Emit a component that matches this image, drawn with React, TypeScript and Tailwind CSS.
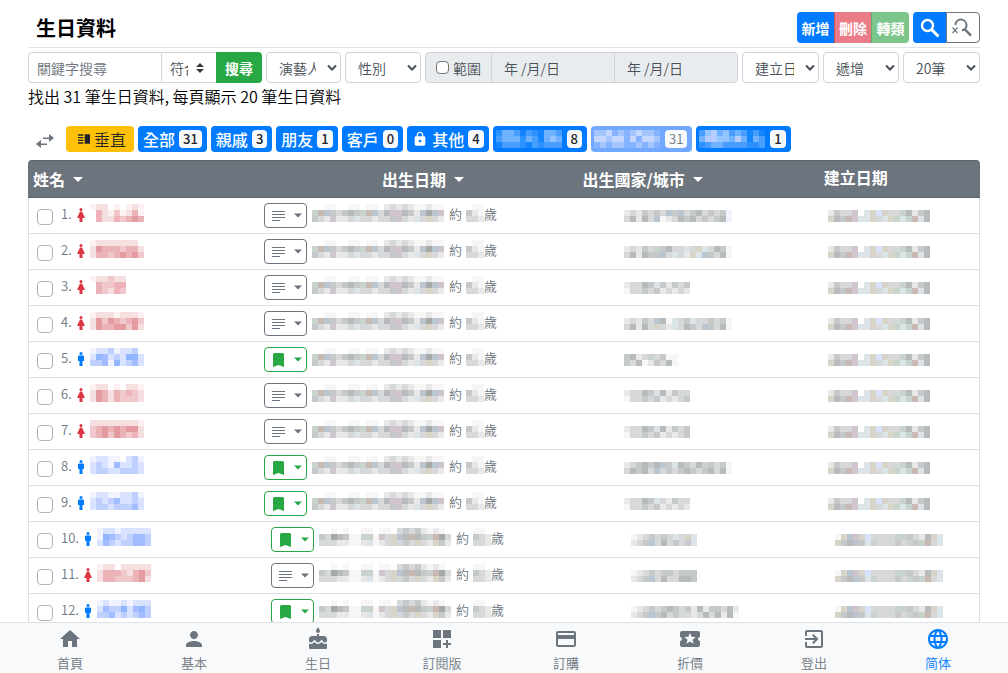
import React from "react";
import clsx from "clsx";
import type { IconType } from "react-icons";
import {
  MdCake,
  MdCreditCard,
  MdDashboardCustomize,
  MdExitToApp,
  MdHome,
  MdLanguage,
  MdLocalActivity,
  MdLock,
  MdPerson,
  MdVerticalSplit,
} from "react-icons/md";

interface IMosaic {
  rows: string[];
  label: string;
  className?: string;
}

interface IPerson {
  female: boolean;
  marked: boolean;
  name: string[];
  place: string[];
}

// one letter for each shade of a masked text
const SHADES: Record<string, string> = {
  a: "#f6f6f7",
  b: "#e8e8e8",
  c: "#d6d8d9",
  d: "#c6c9ca",
  e: "#b8bbbc",
  f: "#a5a9a8",
  g: "#c8bab2",
  h: "#d0c4cf",
  i: "#b9c6d2",
  j: "#dbe4e8",
  k: "#d8d4c8",
  l: "#c8d3ce",
  p: "#fdf1f2",
  q: "#f6dfe1",
  r: "#f0c8cc",
  s: "#ebb3b7",
  t: "#e39ba0",
  u: "#f0f3ff",
  v: "#d9e3ff",
  w: "#bfd0ff",
  x: "#a2bdff",
  y: "#8fb6ff",
  0: "#1484ff",
  1: "#2d91ff",
  2: "#479eff",
  3: "#6fb2ff",
  4: "#93c4ff",
  5: "#b5ccff",
  6: "#85b3ff",
  7: "#a5c5ff",
  8: "#c4d7ff",
};

const BIRTH = [
  "..aa..aa.aa.bcbcbaabaa",
  "lgidcdedlgicehhedbifih",
  "dcbhbbcjccbccdhcbjckcb",
];
const BIRTH_WIDE = [
  "..a.a..aa.aa.cdcdbaba.",
  "dcfedaallahckiegedlgfc",
  "cccbbaabjabckcdckcbkdb",
];
const AGE = [".aa", "dba", "ccb"];
const AGE_WIDE = ["aa.", "dcb", "ccb"];
const CREATED = ["bdcch.jkvkcclebde", "kedghjjkcjkljlgje"];
const CREATED_WIDE = ["akihkvcccclldcbekj", "kdeidjlcccdcldlgcj"];

const PEOPLE: IPerson[] = [
  { female: true, marked: false, name: ["pqq.p.pqp", ".sqprpqsp", ".sqqsrsts"], place: ["bcbdcdcidicdecdcdu", "cebeciabcedecdcdeu"] },
  { female: true, marked: false, name: ["pqqqqqqq.", "qtsssrssq", "qssrststr"], place: ["bcbdcldeccjckjceda", "cebeddicjcbkjidcea"] },
  { female: true, marked: false, name: ["pqqrqq", ".srrss", ".srqsr"], place: ["bccedjdbdcd", "accdcdbcbcb"] },
  { female: true, marked: false, name: ["pqqqpqqqp", "qtrtsrstr", "qtssttrtq"], place: ["bcbdcieajcdjccdcda", "cebeckcbjcedcidcea"] },
  { female: false, marked: true, name: ["uvvwuvvw.", "vyxvwvyyv", "wwxuyvwxv"], place: ["debclcdaa", "dceabdcea"] },
  { female: true, marked: false, name: ["pqq.p.qqp", "qtsqsrsrq", "qtsqsrrrq"], place: ["bccedjebdcc", "accdcdbcbcd"] },
  { female: true, marked: false, name: ["qqqqqqqqp", "rstststtq", "rstrtsrsq"], place: ["bccedjebdcd", "accdcdbcbcd"] },
  { female: false, marked: true, name: ["uvvuu.vwu", "vwvuxvvwv", "vwwvvwwwv"], place: ["bcdedeidjedceldcda", "cedecicdcdedcdecea"] },
  { female: false, marked: true, name: ["uvvuuvvwu", "vwvwxvvwv", "vwwvwwwxv"], place: ["bccedjcbdcc", "accdcdbcbcb"] },
  { female: false, marked: true, name: ["uvvuvvvvv", "uyxwvwxxw", "vxwvwwxxw"], place: ["abcdcdcjckj", "bcdicecdcdj"] },
  { female: true, marked: false, name: ["pqq.qqqqq", "qsssrqstr", "qssrrrstq"], place: ["abcdcddcddd", "bcdicecceed"] },
  { female: false, marked: true, name: ["uvuuvuvvv", "vxwwyvxyw", "wwxvwvwxw"], place: ["abcdcdedcdbebddceb", "bcdidecdccbcecebea"] },
];

const TABS = [
  { label: "全部", count: 31 },
  { label: "親戚", count: 3 },
  { label: "朋友", count: 1 },
  { label: "客戶", count: 0 },
  { label: "其他", count: 4, locked: true },
];

const MASKED_TABS = [
  { rows: ["13320210332", "23331320343", "02221021222"], count: 8, active: false },
  { rows: ["77867678776", "88788686887", "67677667676"], count: 31, active: true },
  { rows: ["24534232020", "35544353032", "12332222112"], count: 1, active: false },
];

const NAV: { label: string; icon: IconType }[] = [
  { label: "首頁", icon: MdHome },
  { label: "基本", icon: MdPerson },
  { label: "生日", icon: MdCake },
  { label: "訂閱版", icon: MdDashboardCustomize },
  { label: "訂購", icon: MdCreditCard },
  { label: "折價", icon: MdLocalActivity },
  { label: "登出", icon: MdExitToApp },
  { label: "简体", icon: MdLanguage },
];

// masked text, 6px cells
function Mosaic({ rows, label, className }: IMosaic) {
  return (
    <svg
      role="img"
      aria-label={label}
      width={rows[0].length * 6}
      height={rows.length * 6}
      shapeRendering="crispEdges"
      className={clsx("block shrink-0", className)}
    >
      {rows.map((row, y) =>
        row.split("").map((cell, x) =>
          SHADES[cell] ? (
            <rect key={`${x}-${y}`} x={x * 6} y={y * 6} width={6} height={6} fill={SHADES[cell]} />
          ) : null
        )
      )}
    </svg>
  );
}

function Gender({ female }: { female: boolean }) {
  return (
    <svg
      width="8"
      height="14"
      viewBox="0 0 8 14"
      className={clsx("block shrink-0", female ? "text-[#dc3545]" : "text-[#007bff]")}
      fill="currentColor"
    >
      <circle cx="4" cy="1.5" r="1.5" />
      {female ? (
        <path d="M3 3.5h2L8 10H5.5v4h-3v-4H0z" />
      ) : (
        <path d="M2 3.5h4a1 1 0 0 1 1 1V9H5.5v5h-3V9H1V4.5a1 1 0 0 1 1-1z" />
      )}
    </svg>
  );
}

function Caret({ className }: { className?: string }) {
  return (
    <svg width="10" height="5" viewBox="0 0 10 5" className={clsx("shrink-0", className)} fill="currentColor">
      <path d="M0 0h10L5 5z" />
    </svg>
  );
}

function Lines() {
  return (
    <svg width="13" height="10" viewBox="0 0 13 10" fill="currentColor" shapeRendering="crispEdges">
      <path d="M0 0h13v1H0zM0 3h13v1H0zM0 6h13v1H0zM0 9h8v1H0z" />
    </svg>
  );
}

function Bookmark() {
  return (
    <svg width="13" height="14" viewBox="0 0 13 14" fill="currentColor">
      <path d="M2.5 0h8A1.5 1.5 0 0 1 12 1.5V14l-5.5-2L1 14V1.5A1.5 1.5 0 0 1 2.5 0z" />
    </svg>
  );
}

function Swap() {
  return (
    <svg width="20" height="16" viewBox="0 0 20 16" fill="currentColor">
      <path d="M14 1l5 4-5 4V6H8V4.5h6zM6 7L1 11l5 4v-3h6v-1.5H6z" />
    </svg>
  );
}

function Search() {
  return (
    <svg width="24" height="24" viewBox="0 0 24 24" fill="none" stroke="currentColor" strokeWidth="2.5">
      <circle cx="9.5" cy="9.5" r="5.5" />
      <path d="M13.5 13.5l7 7" strokeWidth="3" />
    </svg>
  );
}

function SearchOff() {
  return (
    <svg width="24" height="24" viewBox="0 0 24 24" fill="none" stroke="currentColor">
      <path d="M4.5 9a5.5 5.5 0 1 1 6.5 5.5" strokeWidth="2" />
      <path d="M13.5 13l6.5 6.7" strokeWidth="2.4" />
      <path d="M1.5 11.5l5 5.5M6.5 11.5l-5 5.5" strokeWidth="1.2" />
    </svg>
  );
}

function Select({ label, value, className }: { label: string; value: string; className: string }) {
  return (
    <div className={clsx("relative h-[31px]", className)}>
      <select
        aria-label={label}
        className="h-full w-full appearance-none rounded-sm border border-[#ced4da] bg-white pl-3 pr-6 text-sm text-[#495057] outline-none"
      >
        <option>{value}</option>
      </select>
      <svg
        width="10"
        height="8"
        viewBox="0 0 10 8"
        className="pointer-events-none absolute right-1 top-3"
        fill="none"
        stroke="#495057"
        strokeWidth="2"
      >
        <path d="M1 1.5l4 4 4-4" />
      </svg>
    </div>
  );
}

function Filters() {
  return (
    <form className="flex gap-1" onSubmit={(e) => e.preventDefault()}>
      {/* keyword */}
      <div className="flex h-[31px] flex-[234]">
        <input
          type="text"
          aria-label="關鍵字搜尋"
          placeholder="關鍵字搜尋"
          className="w-0 flex-1 rounded-l-sm border border-[#ced4da] px-2 text-sm outline-none placeholder:text-[#6c757d]"
        />
        <div className="relative w-[54px]">
          <select
            aria-label="符合"
            className="h-full w-full appearance-none border-y border-[#ced4da] bg-white pl-2 pr-7 text-sm text-[#495057] outline-none"
          >
            <option>符合</option>
          </select>
          <svg width="8" height="10" viewBox="0 0 8 10" className="pointer-events-none absolute right-3 top-[11px]" fill="#343a40">
            <path d="M0 4l4-4 4 4zM0 6h8l-4 4z" />
          </svg>
        </div>
        <button type="submit" className="w-[46px] rounded-r-sm bg-[#28a745] text-sm font-bold text-white">
          搜尋
        </button>
      </div>
      <Select label="關係" value="演藝人員" className="flex-[75]" />
      <Select label="性別" value="性別" className="flex-[76]" />
      {/* date range */}
      <div className="flex h-[31px] flex-[311] overflow-hidden rounded-sm border border-[#ced4da] bg-[#e9ecef] text-sm text-[#495057]">
        <label className="flex w-[66px] items-center justify-center gap-1 border-r border-[#ced4da]">
          <input type="checkbox" className="size-[13px] appearance-none rounded-sm border border-[#767676] bg-white" />
          範圍
        </label>
        <input
          disabled
          type="text"
          aria-label="開始日期"
          defaultValue="年 /月/日"
          className="w-0 flex-1 border-r border-[#ced4da] px-3"
        />
        <input disabled type="text" aria-label="結束日期" defaultValue="年 /月/日" className="w-0 flex-1 px-3" />
      </div>
      <Select label="排序欄位" value="建立日期" className="flex-[77]" />
      <Select label="排序方式" value="遞增" className="flex-[76]" />
      <Select label="每頁筆數" value="20筆" className="flex-[77]" />
    </form>
  );
}

function Tabs() {
  return (
    <div className="flex items-center gap-1">
      <button aria-label="切換" className="mr-2 w-[26px] pl-[7px] pt-1 text-[#6c757d]">
        <Swap />
      </button>
      <button className="flex h-[26px] items-center gap-0.5 rounded-sm bg-[#ffc107] pl-2.5 pr-2 text-base text-[#212529]">
        <MdVerticalSplit size={16} />
        垂直
      </button>
      {TABS.map((tab) => (
        <button
          key={tab.label}
          className="flex h-[26px] items-center gap-1 rounded-sm bg-[#007bff] px-[5px] text-base font-medium text-white"
        >
          {tab.locked && <MdLock size={16} />}
          {tab.label}
          <span className="rounded-sm bg-[#f8f9fa] px-1 text-[13px] leading-[18px] text-[#212529]">{tab.count}</span>
        </button>
      ))}
      {MASKED_TABS.map((tab) => (
        <button
          key={tab.count}
          className={clsx(
            "flex h-[26px] items-center gap-[5px] rounded-sm pl-[3px] pr-[5px]",
            tab.active ? "bg-[#70a9ff] text-[#6c757d]" : "bg-[#007bff] font-medium text-[#212529]"
          )}
        >
          <Mosaic rows={tab.rows} label="自訂分類" />
          <span className="rounded-sm bg-[#f8f9fa] px-1 text-[13px] leading-[18px]">{tab.count}</span>
        </button>
      ))}
    </div>
  );
}

function Row({ person, index }: { person: IPerson; index: number }) {
  const wide = index > 8;

  return (
    <tr>
      <td className="border-l pl-2">
        <div className="flex">
          <input
            type="checkbox"
            aria-label={`選取第 ${index + 1} 筆`}
            className="mt-[11px] size-4 appearance-none rounded-sm border border-[#adb5bd] bg-white"
          />
          <span className="ml-2 mt-1.5">{index + 1}.</span>
          <span className="ml-[5px] mt-2.5">
            <Gender female={person.female} />
          </span>
          <Mosaic rows={person.name} label="姓名" className="ml-[5px] mt-1.5" />
        </div>
      </td>
      <td className={wide ? "pl-[7px]" : ""}>
        <div className="flex">
          <button
            aria-label="備註"
            className={clsx(
              "mt-[5px] flex h-[25px] w-[43px] items-center justify-between rounded-sm border pl-[7px] pr-1",
              person.marked ? "border-[#28a745] text-[#28a745]" : "border-[#6c757d] text-[#6c757d]"
            )}
          >
            {person.marked ? <Bookmark /> : <Lines />}
            <Caret className="w-2" />
          </button>
          <Mosaic rows={wide ? BIRTH_WIDE : BIRTH} label="出生日期" className="ml-[5px] mt-1.5" />
          <span className="ml-[5px] mt-1.5">約</span>
          <Mosaic rows={wide ? AGE_WIDE : AGE} label="年齡" className="ml-1 mt-1.5" />
          <span className="mt-1.5">歲</span>
        </div>
      </td>
      <td className={wide ? "pl-[7px]" : ""}>
        <Mosaic rows={person.place} label="出生國家/城市" className="ml-[50px] mt-3" />
      </td>
      <td className={clsx("border-r", wide && "pl-[7px]")}>
        <Mosaic rows={wide ? CREATED_WIDE : CREATED} label="建立日期" className="ml-1 mt-3" />
      </td>
    </tr>
  );
}

function DataTable() {
  return (
    <table className="w-full table-fixed border-separate border-spacing-0 text-[13px] leading-5 text-[#6c757d] [&_tbody_td]:h-9 [&_tbody_td]:border-b [&_tbody_td]:border-[#dee2e6] [&_tbody_td]:align-top">
      <colgroup>
        <col className="w-[24.8%]" />
        <col className="w-[32.6%]" />
        <col className="w-[26.2%]" />
        <col className="w-[16.4%]" />
      </colgroup>
      <thead>
        <tr className="h-[38px] text-left text-base text-white [&>th]:border-y [&>th]:border-[#5c636a] [&>th]:bg-[#6c757d]">
          <th className="rounded-tl-sm pl-[5px]">
            <span className="flex items-center gap-2">
              姓名 <Caret />
            </span>
          </th>
          <th>
            <span className="flex items-center gap-2 pl-[118px]">
              出生日期 <Caret />
            </span>
          </th>
          <th>
            <span className="flex items-center gap-2 pl-2">
              出生國家/城市 <Caret />
            </span>
          </th>
          <th className="rounded-tr-sm pb-1">建立日期</th>
        </tr>
      </thead>
      <tbody>
        {PEOPLE.map((person, index) => (
          <Row key={index} person={person} index={index} />
        ))}
      </tbody>
    </table>
  );
}

function BottomNav() {
  return (
    <nav className="fixed inset-x-0 bottom-0 grid grid-cols-8 border-t border-[#dee2e6] bg-[#f8f9fa] px-2 pt-1">
      {NAV.map(({ label, icon: Icon }) => (
        <a
          key={label}
          href="#"
          className={clsx(
            "flex flex-col items-center gap-0.5 text-[13px] leading-5",
            label === "简体" ? "text-[#007bff]" : "text-[#6c757d]"
          )}
        >
          <Icon size={24} />
          {label}
        </a>
      ))}
    </nav>
  );
}

export default function App() {
  return (
    <div className="h-screen overflow-hidden bg-white font-['Noto_Sans_CJK_TC','Noto_Sans',sans-serif] font-[350] text-[#212529]">
      <main className="px-7 pt-3">
        <header className="mb-1 flex items-start justify-between border-b border-[#dee2e6] pb-1">
          <h1 className="pl-2 text-xl font-bold leading-[31px] text-black">生日資料</h1>
          <div className="flex gap-1">
            <div className="flex h-[31px] text-sm font-bold text-white">
              <button className="w-[37px] rounded-l-sm bg-[#007bff]">新增</button>
              <button className="w-[37px] border-l border-[#c9505f] bg-[#ea7c87]">刪除</button>
              <button className="w-[38px] rounded-r-sm border-l border-[#5fae70] bg-[#7cc68b]">轉類</button>
            </div>
            <div className="flex h-[31px]">
              <button aria-label="搜尋" className="flex w-[33px] items-center justify-center rounded-l-sm bg-[#007bff] text-white">
                <Search />
              </button>
              <button
                aria-label="清除搜尋"
                className="flex w-[34px] items-center justify-center rounded-r-sm border border-[#6c757d] text-[#6c757d]"
              >
                <SearchOff />
              </button>
            </div>
          </div>
        </header>
        <Filters />
        <p className="mb-[18px] mt-px text-base text-black">找出 31 筆生日資料, 每頁顯示 20 筆生日資料</p>
        <Tabs />
        <div className="mt-2">
          <DataTable />
        </div>
      </main>
      <BottomNav />
    </div>
  );
}
